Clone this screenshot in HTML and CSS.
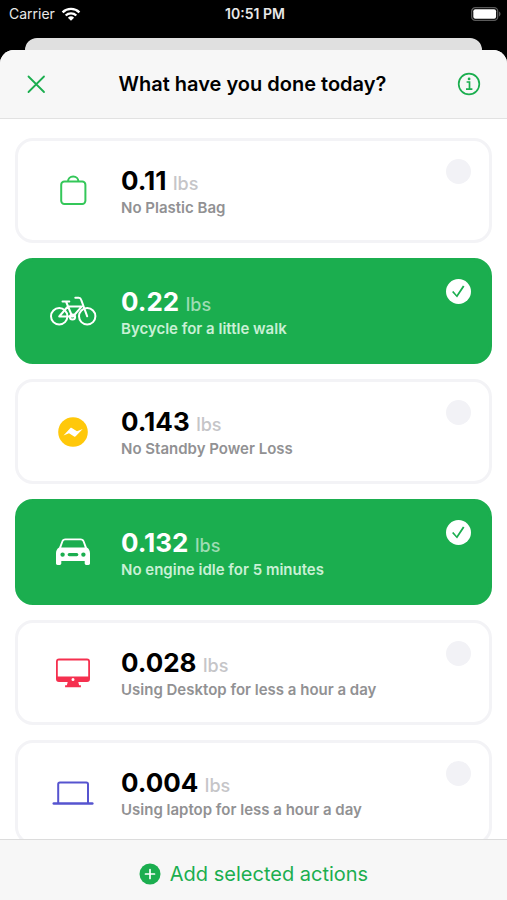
FILE: index.html
```html
<!DOCTYPE html>
<html lang="en">
<head>
<meta charset="utf-8">
<meta name="viewport" content="width=device-width, initial-scale=1">
<title>What have you done today?</title>
<link rel="stylesheet" href="styles.css">
</head>
<body>
<div class="status">
  <div class="carrier">Carrier
    <svg width="20" height="14" viewBox="0 0 20 14" fill="none" stroke="#fff" stroke-width="2.4"><path d="M1.6 5.3a12 12 0 0 1 16.8 0M4.7 8.5a7.6 7.6 0 0 1 10.6 0"/><path d="M10 13.7 6.9 10.7a4.5 4.5 0 0 1 6.2 0z" fill="#fff" stroke="none"/></svg>
  </div>
  <time class="clock">10:51 PM</time>
  <div class="battery">
    <svg width="30" height="14" viewBox="0 0 30 14"><rect x=".7" y=".7" width="26" height="12.6" rx="3.6" fill="none" stroke="#5a5a5a" stroke-width="1.3"/><rect x="2.3" y="2.3" width="22.8" height="9.4" rx="2" fill="#fff"/><path d="M28 4.6c2 .8 2 4 0 4.800z" fill="#5a5a5a"/></svg>
  </div>
</div>
<div class="back-sheet"></div>
<div class="sheet">
  <header class="bar">
    <button class="icon-button" type="button" aria-label="Close">
      <svg width="24" height="24" viewBox="0 0 24 24" fill="none" stroke="#1bae4f" stroke-width="1.8" stroke-linecap="round"><path d="M4.500 4.500 20 20M20 4.500 4.500 20"/></svg>
    </button>
    <h1 class="title">What have you done today?</h1>
    <button class="icon-button" type="button" aria-label="Information">
      <svg width="24" height="24" viewBox="0 0 24 24" fill="none" stroke="#1bae4f" stroke-width="1.7"><circle cx="12" cy="12" r="10.3"/><path d="M9.6 10h2.9v7M9 17.2h6.4"/><circle cx="12.1" cy="6.9" r="1.4" fill="#1bae4f" stroke="none"/></svg>
    </button>
  </header>
  <main class="list">
    <label class="card">
      <svg class="icon" width="48" height="36" viewBox="0 0 48 36" fill="none" stroke="#34c759" stroke-width="2"><rect x="12.2" y="8.500" width="24.2" height="22.500" rx="3.2"/><path d="M19 8.500c0-3 2.200-5 5.200-5s5.200 2 5.200 5"/></svg>
      <span class="text"><span class="amount"><b class="value">0.11</b> <span class="unit">lbs</span></span><span class="name">No Plastic Bag</span></span>
      <input class="check" type="checkbox">
    </label>
    <label class="card">
      <svg class="icon" width="48" height="36" viewBox="0 0 48 36" fill="none" stroke="#fff" stroke-width="2" stroke-linecap="round" stroke-linejoin="round"><circle cx="10.2" cy="23.3" r="8.2"/><circle cx="38.2" cy="23.3" r="8.2"/><path d="M10.2 23.500 18.800 13.500H32M10.2 23.500H24L32.6 13.600M22.800 22.500 17 8.500M13.5 8.500h6.800M38.2 23.3 32.200 6.800c-.5-1.600-1.200-2-2.500-2H26.300"/><circle cx="23.500" cy="24" r="2.6"/></svg>
      <span class="text"><span class="amount"><b class="value">0.22</b> <span class="unit">lbs</span></span><span class="name">Bycycle for a little walk</span></span>
      <input class="check" type="checkbox" checked>
    </label>
    <label class="card">
      <svg class="icon" width="48" height="36" viewBox="0 0 48 36"><circle cx="24" cy="18" r="14.8" fill="#ffc80a"/><path d="M14.5 21.5 21.2 14.2c.5-.5 1-.5 1.6-.1l5.2 3.2 5.7-2.2-7 7.2c-.5.6-1 .6-1.6.2L20 19.3z" fill="#fff"/></svg>
      <span class="text"><span class="amount"><b class="value">0.143</b> <span class="unit">lbs</span></span><span class="name">No Standby Power Loss</span></span>
      <input class="check" type="checkbox">
    </label>
    <label class="card">
      <svg class="icon" width="48" height="36" viewBox="0 0 48 36"><path fill="#fff" fill-rule="evenodd" d="M16.5 4.6h15c2.1 0 3.4.9 4.1 2.8l2.3 6.2c2.1 1.3 3.1 3.2 3.1 5.7v10c0 1-.6 1.6-1.6 1.6h-2.1c-1 0-1.6-.6-1.6-1.6V27H12.3v2.3c0 1-.6 1.6-1.6 1.6H8.6c-1 0-1.6-.6-1.6-1.6v-10c0-2.5 1-4.4 3.1-5.7l2.3-6.2c.7-1.9 2-2.8 4.1-2.8zM16.6 6.3c-1.3 0-2.1.6-2.5 1.7L12.2 13.4h23.6L33.9 8c-.4-1.1-1.2-1.7-2.5-1.700zM13.6 18.4a2.2 2.2 0 1 0 0 4.4 2.2 2.2 0 0 0 0-4.4zM34.4 18.4a2.2 2.2 0 1 0 0 4.4 2.2 2.2 0 0 0 0-4.4zM20.3 18.9a1.7 1.7 0 0 0 0 3.4h7.4a1.7 1.7 0 0 0 0-3.4z"/></svg>
      <span class="text"><span class="amount"><b class="value">0.132</b> <span class="unit">lbs</span></span><span class="name">No engine idle for 5 minutes</span></span>
      <input class="check" type="checkbox" checked>
    </label>
    <label class="card">
      <svg class="icon" width="48" height="36" viewBox="0 0 48 36"><path fill="#f5304f" fill-rule="evenodd" d="M10 3.500h28a3 3 0 0 1 3 3v17.600a3 3 0 0 1-3 3H29.300l.8 3.200h1.800v2H16.100v-2h1.800l.8-3.200H10a3 3 0 0 1-3-3V6.500a3 3 0 0 1 3-3zM10 5.400c-.8 0-1.200.4-1.200 1.200V21.500h30.400V6.600c0-.8-.4-1.200-1.200-1.200zM24 23a1.500 1.500 0 1 0 0 3 1.500 1.500 0 0 0 0-3z"/></svg>
      <span class="text"><span class="amount"><b class="value">0.028</b> <span class="unit">lbs</span></span><span class="name">Using Desktop for less a hour a day</span></span>
      <input class="check" type="checkbox">
    </label>
    <label class="card">
      <svg class="icon" width="48" height="36" viewBox="0 0 48 36" fill="none" stroke="#5654cf"><path stroke-width="2" d="M9.200 28V9.200c0-1.100.6-1.700 1.700-1.700h26.400c1.100 0 1.700.6 1.700 1.700V28"/><path stroke-width="2.600" stroke-linecap="round" d="M4.800 28.500h38.500"/></svg>
      <span class="text"><span class="amount"><b class="value">0.004</b> <span class="unit">lbs</span></span><span class="name">Using laptop for less a hour a day</span></span>
      <input class="check" type="checkbox">
    </label>
  </main>
  <footer class="footer">
    <button class="add" type="button">
      <svg width="22" height="22" viewBox="0 0 22 22"><circle cx="11" cy="11" r="10.500" fill="#1bae4f"/><path d="M11 6.500v9M6.500 11h9" stroke="#fff" stroke-width="1.700" stroke-linecap="round"/></svg>
      Add selected actions
    </button>
  </footer>
</div>
</body>
</html>
```

FILE: styles.css
```css
* {
  box-sizing: border-box;
}

body {
  display: flex;
  flex-direction: column;
  height: 100vh;
  margin: 0;
  background: #000;
  color: #000;
  font-family: Inter, "Liberation Sans", sans-serif;
}

button {
  display: flex;
  align-items: center;
  padding: 0;
  border: 0;
  background: none;
  color: #1bae4f;
  font: inherit;
}

.status {
  display: grid;
  grid-template-columns: 1fr auto 1fr;
  align-items: center;
  flex: none;
  height: 38px;
  padding: 0 6px 11px 9px;
  color: #e8e8e8;
  font-size: 14px;
  line-height: 20px;
}

.carrier {
  display: flex;
  align-items: center;
  gap: 6px;
}

.clock {
  font-weight: 600;
}

.battery {
  display: flex;
  justify-content: flex-end;
}

.back-sheet {
  flex: none;
  height: 12px;
  margin: 0 25px;
  border-radius: 12px 12px 0 0;
  background: #e0e0e0;
}

.sheet {
  display: flex;
  flex: 1;
  flex-direction: column;
  min-height: 0;
  overflow: hidden;
  border-radius: 14px 14px 0 0;
  background: #fff;
}

.bar {
  display: flex;
  align-items: center;
  justify-content: space-between;
  flex: none;
  height: 69px;
  padding: 0 26px 0 24px;
  border-bottom: 1px solid #e2e2e2;
  background: #f7f7f7;
}

.title {
  margin: 0;
  font-size: 20px;
  font-weight: 600;
  line-height: 28px;
}

.list {
  display: flex;
  flex: 1;
  flex-direction: column;
  gap: 15px;
  min-height: 0;
  padding: 19px 15px;
  overflow-y: auto;
  scrollbar-width: none;
}

.card {
  display: grid;
  grid-template-columns: 96px 1fr auto;
  align-items: center;
  flex: none;
  height: 105px;
  padding: 18px 18px 18px 7px;
  border: 3px solid #f3f3f6;
  border-radius: 18px;
  background: #fff;
}

.icon {
  justify-self: center;
}

.text {
  display: flex;
  flex-direction: column;
  padding-top: 3px;
}

.value {
  font-size: 26px;
  font-weight: 700;
  line-height: 32px;
}

.unit {
  margin-left: 2px;
  color: #c5c5c8;
  font-size: 18px;
  font-weight: 500;
}

.name {
  color: #919193;
  font-size: 15px;
  font-weight: 600;
  line-height: 22px;
}

.check {
  align-self: start;
  width: 25px;
  height: 25px;
  margin: 0;
  border-radius: 50%;
  background: #f2f2f6;
  appearance: none;
}

.check:checked {
  display: grid;
  place-items: center;
  background: #fff;
}

.check:checked::before {
  content: "";
  width: 13px;
  height: 13px;
  background: #1bae4f;
  clip-path: polygon(0 53%, 11% 47%, 36% 77%, 84% 4%, 96% 11%, 39% 97%);
}

.card:has(:checked) {
  height: 106px;
  border-color: #1bae4f;
  background: #1bae4f;
}

.card:has(:checked) .value {
  color: #fff;
}

.card:has(:checked) .unit {
  color: #9edcb3;
}

.card:has(:checked) .name {
  color: #c9f0d5;
}

.footer {
  display: flex;
  justify-content: center;
  flex: none;
  height: 61px;
  border-top: 1px solid #dcdcdc;
  background: #f7f7f7;
}

.add {
  gap: 9px;
  padding-top: 8px;
  font-size: 20px;
  line-height: 28px;
}
```
